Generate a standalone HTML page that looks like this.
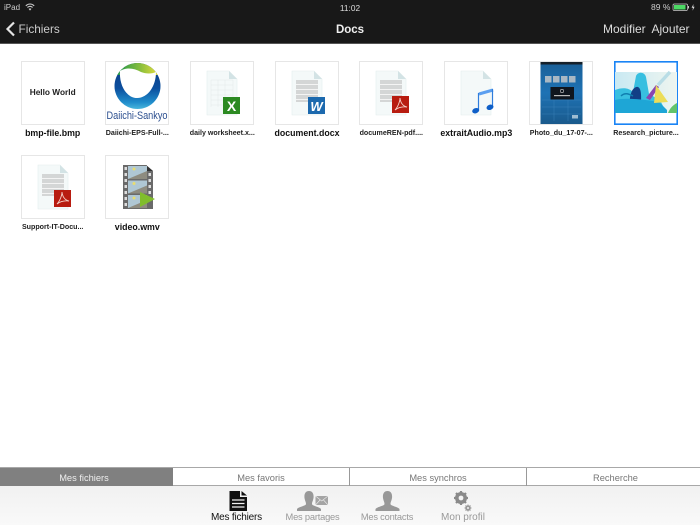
<!DOCTYPE html>
<html><head><meta charset="utf-8"><style>
html,body{margin:0;padding:0;width:700px;height:525px;overflow:hidden;background:#fff;font-family:"Liberation Sans",sans-serif}
.a{position:absolute;white-space:nowrap}
.t{position:absolute;width:62px;height:62px;border:1px solid #e6e6e6;background:#fff;overflow:hidden}
.l{position:absolute;width:84px;text-align:center;font-weight:bold;color:#222;white-space:nowrap}
.s{font-size:7.1px;line-height:10px}
.b{font-size:8.8px;line-height:12px;color:#111}
.tab{position:absolute;top:468.500px;height:18px;line-height:18px;text-align:center;font-size:9.300px;color:#777}
.nav{position:absolute;top:511px;width:80px;text-align:center;font-size:9.300px;line-height:12px;color:#999;letter-spacing:-.2px}
</style></head><body>
<div class="a" style="left:0;top:0;width:700px;height:43px;background:#181818;border-bottom:1px solid #555"></div>
<div class="a" style="left:4px;top:3px;font-size:8px;line-height:9px;color:#ccc">iPad</div>
<svg class="a" style="left:25px;top:3px" width="10" height="8" viewBox="0 0 10 8"><path d="M.8 2.8C3.3.4 6.7.4 9.2 2.8M2.4 4.4C4 3 6 3 7.6 4.4" fill="none" stroke="#ccc" stroke-width="1.1"/><path d="M5 7.6L3.6 5.9C4.4 5.2 5.6 5.2 6.4 5.9Z" fill="#ccc"/></svg>
<div class="a" style="left:330px;width:40px;top:3px;text-align:center;font-size:8.300px;line-height:10px;color:#ddd">11:02</div>
<div class="a" style="left:651px;top:3px;font-size:8.500px;line-height:9px;color:#ccc">89 %</div>
<svg class="a" style="left:672px;top:3px" width="26" height="9" viewBox="0 0 26 9"><rect x="1" y="1" width="14.500" height="6.500" rx="1.200" fill="none" stroke="#ccc" stroke-width=".7"/><rect x="2" y="2" width="11.500" height="4.500" fill="#4cd964"/><rect x="16" y="3" width="1" height="2.500" fill="#ccc"/><path d="M21.500 1L19.600 4.700H21L20.500 7.800L22.600 3.800H21.200Z" fill="#ddd"/></svg>
<svg class="a" style="left:5px;top:21px" width="11" height="16" viewBox="0 0 11 16"><path d="M9 1.500L2.500 8L9 14.500" fill="none" stroke="#e4e4e4" stroke-width="2.200"/></svg>
<div class="a" style="left:18.500px;top:22px;font-size:11.800px;line-height:15px;color:#ccc">Fichiers</div>
<div class="a" style="left:300px;width:100px;top:23px;text-align:center;font-size:11.500px;line-height:15px;font-weight:bold;color:#f0f0f0">Docs</div>
<div class="a" style="left:603px;top:22px;font-size:12px;line-height:15px;color:#ddd">Modifier</div>
<div class="a" style="left:651.500px;top:22px;font-size:12px;line-height:15px;color:#ddd">Ajouter</div>

<svg width="0" height="0" style="position:absolute"><defs>
<g id="page"><path d="M0 0H22L30 8V44H0Z" fill="#f4f9f9" stroke="#e3eded" stroke-width=".6"/><path d="M22 0L30 8H22Z" fill="#d3e3e5"/></g>
<g id="lines"><rect x="4" y="9" width="22" height="22" fill="#b4b4b4" opacity=".5"/><rect x="4" y="13" width="22" height="1" fill="#f4f4f4"/><rect x="4" y="18" width="22" height="1" fill="#f4f4f4"/><rect x="4" y="23" width="22" height="1" fill="#f4f4f4"/><rect x="4" y="28" width="22" height="1" fill="#f4f4f4"/></g>
<g id="pdf"><use href="#page"/><use href="#lines"/><rect x="16" y="25" width="17" height="17" fill="#b81c10"/><path d="M19 39C22 36 24 30 24 27C24.500 32 27 35 31 36C27 35.500 23 36 19 39Z" fill="none" stroke="#f4d0c8" stroke-width=".9"/></g>
</defs></svg>

<div class="t" style="left:20.700px;top:61px"><div class="a" style="left:0;width:62px;top:25px;text-align:center;font-size:8.300px;line-height:10px;font-weight:bold;color:#222">Hello World</div></div>
<div class="t" style="left:105.300px;top:61px"><svg width="62" height="62" viewBox="0 0 62 62"><defs><linearGradient id="g1" x1="0" y1="0" x2="0" y2="1"><stop offset="0" stop-color="#0a3a82"/><stop offset=".55" stop-color="#0c4f9e"/><stop offset=".85" stop-color="#1f8ccb"/><stop offset="1" stop-color="#4ab6dc"/></linearGradient><linearGradient id="g2" x1="0" y1="0" x2="1" y2="0"><stop offset="0" stop-color="#12924a"/><stop offset=".55" stop-color="#86bd3c"/><stop offset="1" stop-color="#f3e23e"/></linearGradient><clipPath id="c1"><circle cx="31.500" cy="24" r="23"/></clipPath></defs><circle cx="31.500" cy="24" r="23" fill="url(#g1)"/><rect x="8" y="0" width="47" height="13" fill="url(#g2)" clip-path="url(#c1)"/><path d="M14 9C20 5 28 6 35 10C40 12 46 12 50 10C50 24 42 36 31 36C21 36 13 24 14 9Z" fill="#fff"/><text x="31" y="57" text-anchor="middle" font-family="Liberation Sans,sans-serif" font-size="10.800" textLength="61" lengthAdjust="spacingAndGlyphs" fill="#2c4f8f">Daiichi-Sankyo</text></svg></div>
<div class="t" style="left:190.300px;top:61px"><svg width="62" height="62" viewBox="0 0 62 62"><g transform="translate(16 9)"><use href="#page"/><path d="M4 9H26M4 14H26M4 19H26M4 24H26M4 29H26M4 34H26M4 9V36M11 9V36M18 9V36M26 9V36" stroke="#dfe6e6" stroke-width=".4"/></g><rect x="32" y="35" width="17" height="17" fill="#2c8a22"/><text x="40.500" y="49" text-anchor="middle" font-size="14" font-weight="bold" fill="#fff" font-family="Liberation Sans,sans-serif">X</text></svg></div>
<div class="t" style="left:275px;top:61px"><svg width="62" height="62" viewBox="0 0 62 62"><g transform="translate(16 9)"><use href="#page"/><use href="#lines"/></g><rect x="32" y="35" width="17" height="17" fill="#1c69ae"/><text x="40.500" y="49" text-anchor="middle" font-size="13" font-weight="bold" font-style="italic" fill="#fff" font-family="Liberation Sans,sans-serif">W</text></svg></div>
<div class="t" style="left:359.300px;top:61px"><svg width="62" height="62" viewBox="0 0 62 62"><use href="#pdf" x="16" y="9"/></svg></div>
<div class="t" style="left:444.300px;top:61px"><svg width="62" height="62" viewBox="0 0 62 62"><g transform="translate(16 9)"><use href="#page"/></g><path d="M34 32L48 28" stroke="#5b9ff0" stroke-width="3"/><path d="M33.500 31V48M47.500 27V45" stroke="#2f7ddc" stroke-width="1.200"/><ellipse cx="30.700" cy="48.700" rx="3.600" ry="2.600" fill="#0f5fc8" transform="rotate(-20 30.700 48.700)"/><ellipse cx="45" cy="45.300" rx="3.600" ry="2.600" fill="#0f5fc8" transform="rotate(-20 45 45.300)"/></svg></div>
<div class="t" style="left:529.300px;top:61px"><svg width="62" height="62" viewBox="0 0 62 62"><defs><linearGradient id="g3" x1="0" y1="0" x2="0" y2="1"><stop offset="0" stop-color="#1a5f97"/><stop offset=".5" stop-color="#1e72b4"/><stop offset="1" stop-color="#1a5a8c"/></linearGradient></defs><rect x="10.500" y="0" width="42" height="62" fill="url(#g3)"/><rect x="10.500" y="0" width="42" height="2.500" fill="#15202a"/><g fill="#a9b8c4"><rect x="15" y="14" width="6.500" height="6.500"/><rect x="23" y="14" width="6.500" height="6.500"/><rect x="31" y="14" width="6.500" height="6.500"/><rect x="39" y="14" width="6.500" height="6.500"/></g><rect x="20.500" y="25" width="23.500" height="12.500" fill="#10161e"/><circle cx="32" cy="29" r="1.700" fill="none" stroke="#ccc" stroke-width=".6"/><rect x="24" y="33" width="16" height="1.200" fill="#bbb"/><path d="M12 38H51M12 45H51M12 52H51M24 38V59M38 38V59" stroke="#3f86bd" stroke-width=".4"/><rect x="42" y="53" width="6" height="3.500" fill="#9fbdd2"/></svg></div>
<div class="t" style="left:614px;top:61px;border-color:#1a84f5;box-shadow:inset 0 0 0 .6px #1a84f5"><svg width="62" height="62" viewBox="0 0 62 62"><defs><linearGradient id="g4" x1="0" y1="0" x2="1" y2="0"><stop offset="0" stop-color="#c9e9f2"/><stop offset="1" stop-color="#eef5f0"/></linearGradient></defs><rect x="0" y="10" width="62" height="41" fill="url(#g4)"/><path d="M0 28C8 25 14 26 18 30L21 14C23 9 30 10 31 15L34 32L45 38L50 48L48 51H0Z" fill="#38bfe0"/><path d="M15 42C14 32 18 24 23 25C27 27 26 36 26 42Z" fill="#123f86"/><path d="M0 38C12 35 30 38 44 40L52 48V51H0Z" fill="#1ea6d6"/><path d="M31 36L41 23L44 25L35 38Z" fill="#8a45b0"/><path d="M43 23L55 10" stroke="#b9dde6" stroke-width="3.500"/><path d="M41 23L53 40L39 41Z" fill="#ecdd58"/><path d="M53 51C55 46 58 43 62 41V51Z" fill="#63c46b"/><path d="M6 34C10 30 14 32 18 34" stroke="#0f7fb0" stroke-width="1.500" fill="none"/></svg></div>
<div class="t" style="left:20.700px;top:155px"><svg width="62" height="62" viewBox="0 0 62 62"><use href="#pdf" x="16" y="9"/></svg></div>
<div class="t" style="left:105.300px;top:155px"><svg width="62" height="62" viewBox="0 0 62 62"><path d="M17 9H40L47 15V53H17Z" fill="#6a6a6a"/><path d="M40 9L47 15H40Z" fill="#333"/><g fill="#ddd"><rect x="18.500" y="11" width="2.500" height="3"/><rect x="18.500" y="17" width="2.500" height="3"/><rect x="18.500" y="23" width="2.500" height="3"/><rect x="18.500" y="29" width="2.500" height="3"/><rect x="18.500" y="35" width="2.500" height="3"/><rect x="18.500" y="41" width="2.500" height="3"/><rect x="18.500" y="47" width="2.500" height="3"/><rect x="42.500" y="17" width="2.500" height="3"/><rect x="42.500" y="23" width="2.500" height="3"/><rect x="42.500" y="29" width="2.500" height="3"/><rect x="42.500" y="35" width="2.500" height="3"/></g><g fill="#afc7d4"><rect x="22" y="10" width="19" height="13"/><rect x="22" y="24.500" width="19" height="13"/><rect x="22" y="39" width="19" height="13"/></g><g fill="#8e8c80"><path d="M22 23L41 15V23Z"/><path d="M22 37.500L41 29.500V37.500Z"/><path d="M22 52L41 44V52Z"/></g><g fill="#e8dd70"><circle cx="28" cy="13" r="1.500"/><circle cx="28" cy="27.500" r="1.500"/><circle cx="28" cy="42" r="1.500"/></g><path d="M34 36L49 43L34 51Z" fill="#80bd2c"/></svg></div>

<div class="l b" style="left:10.700px;top:126.500px">bmp-file.bmp</div>
<div class="l s" style="left:95.300px;top:127.500px">Daiichi-EPS-Full-...</div>
<div class="l s" style="left:180.300px;top:127.500px">daily worksheet.x...</div>
<div class="l b" style="left:265px;top:126.500px">document.docx</div>
<div class="l s" style="left:349.300px;top:127.500px">documeREN-pdf....</div>
<div class="l b" style="left:434.300px;top:126.500px">extraitAudio.mp3</div>
<div class="l s" style="left:519.300px;top:127.500px">Photo_du_17-07-...</div>
<div class="l s" style="left:604px;top:127.500px">Research_picture...</div>
<div class="l s" style="left:10.700px;top:221.500px">Support-IT-Docu...</div>
<div class="l b" style="left:95.300px;top:220.500px">video.wmv</div>

<div class="a" style="left:0;top:467px;width:700px;height:19px;background:#fff;border-top:1px solid #a8a8a8;border-bottom:1px solid #a8a8a8;box-sizing:border-box"></div>
<div class="a" style="left:0;top:468px;width:173px;height:18px;background:#808080"></div>
<div class="tab" style="left:0;width:168px;color:#eee">Mes fichiers</div>
<div class="tab" style="left:173px;width:176px">Mes favoris</div>
<div class="a" style="left:349px;top:468px;width:1px;height:18px;background:#999"></div>
<div class="tab" style="left:350px;width:176px">Mes synchros</div>
<div class="a" style="left:526px;top:468px;width:1px;height:18px;background:#999"></div>
<div class="tab" style="left:529px;width:173px">Recherche</div>
<div class="a" style="left:0;top:486px;width:700px;height:39px;background:linear-gradient(#f1f1f1,#f9f9f9)"></div>

<svg class="a" style="left:228px;top:490px" width="20" height="22" viewBox="0 0 20 22"><path d="M1.500 1H12V7H19V21H1.500Z" fill="#111"/><path d="M13.500 1L19 5.500H13.500Z" fill="#111"/><path d="M4 10H16.500M4 13.500H16.500M4 17H16.500" stroke="#f2f2f2" stroke-width="1.300"/></svg>
<svg class="a" style="left:297px;top:490px" width="32" height="22" viewBox="0 0 32 22"><path d="M12 1C15.500 1 17 4 16.500 8C16 11 15 12 15 14C15 16 22 16.500 24 19V21H0V19C2 16.500 9 16 9 14C9 12 8 11 7.500 8C7 4 8.500 1 12 1Z" fill="#989898"/><rect x="18.500" y="6" width="12.500" height="9" fill="#a5a5a5"/><path d="M18.500 6L24.700 11L31 6M18.500 15L23 10M31 15L26.500 10" fill="none" stroke="#eee" stroke-width=".6"/></svg>
<svg class="a" style="left:375px;top:490px" width="26" height="22" viewBox="0 0 26 22"><path d="M12.500 1C16 1 17.500 4 17 8C16.500 11 15.500 12 15.500 14C15.500 16 22.500 16.500 24.500 19V21H.5V19C2.500 16.500 9.500 16 9.500 14C9.500 12 8.500 11 8 8C7.500 4 9 1 12.500 1Z" fill="#989898"/></svg>
<svg class="a" style="left:452px;top:490px" width="20" height="22" viewBox="0 0 20 22"><circle cx="9" cy="8" r="4.500" fill="none" stroke="#8a8a8a" stroke-width="3"/><path d="M9 1V15M2 8H16M4 3L14 13M14 3L4 13" stroke="#8a8a8a" stroke-width="2.200"/><circle cx="9" cy="8" r="2.400" fill="#f3f3f3"/><circle cx="16" cy="18" r="2" fill="none" stroke="#999" stroke-width="1.500"/><path d="M16 14.500V21.500M12.500 18H19.500M13.500 15.500L18.500 20.500M18.500 15.500L13.500 20.500" stroke="#999" stroke-width="1"/><circle cx="16" cy="18" r="1" fill="#f3f3f3"/></svg>

<div class="nav" style="left:196.500px;top:512px;color:#111;font-size:10px">Mes fichiers</div>
<div class="nav" style="left:272.500px">Mes partages</div>
<div class="nav" style="left:347px">Mes contacts</div>
<div class="nav" style="left:423px;top:512px;letter-spacing:0;font-size:10px">Mon profil</div>
</body></html>
